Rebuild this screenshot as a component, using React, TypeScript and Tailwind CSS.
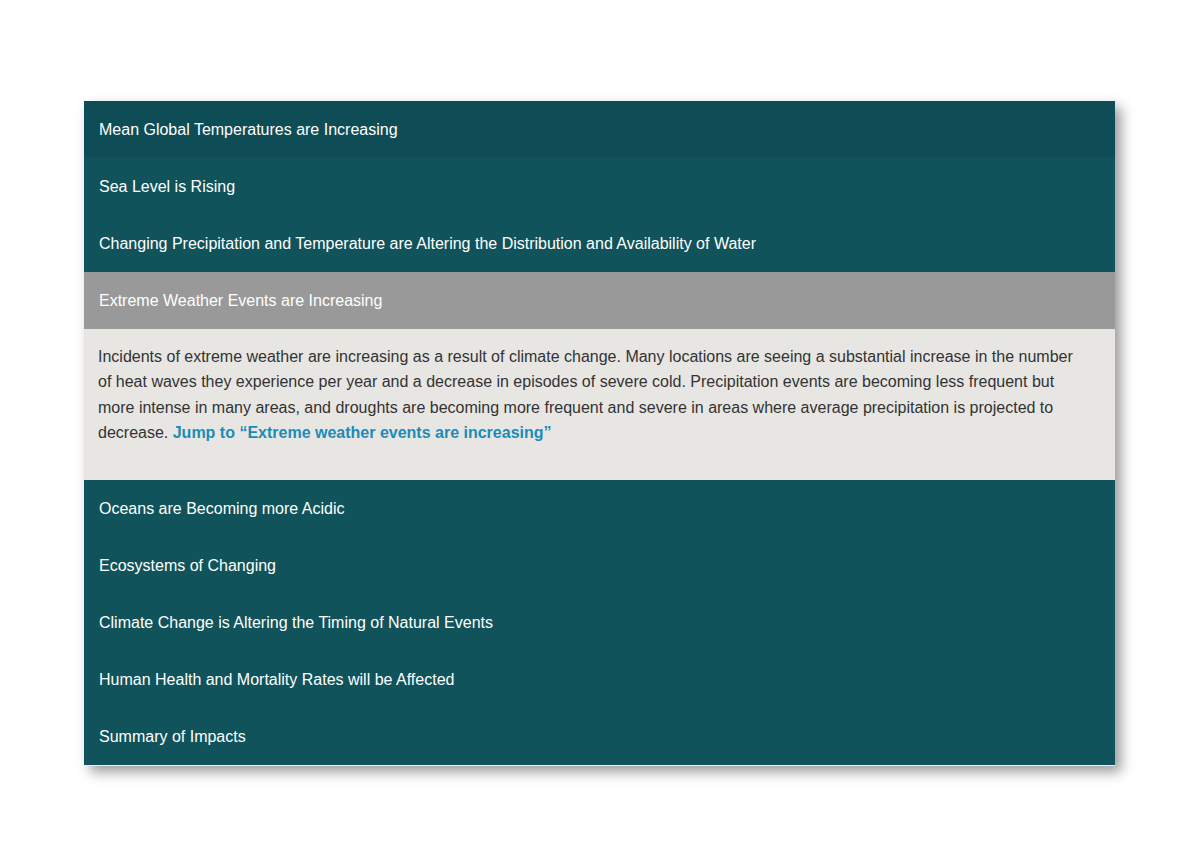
const items = [
  "Mean Global Temperatures are Increasing",
  "Sea Level is Rising",
  "Changing Precipitation and Temperature are Altering the Distribution and Availability of Water",
  "Extreme Weather Events are Increasing",
  "Oceans are Becoming more Acidic",
  "Ecosystems of Changing",
  "Climate Change is Altering the Timing of Natural Events",
  "Human Health and Mortality Rates will be Affected",
  "Summary of Impacts",
];

export default function App() {
  return (
    <div className="min-h-[866px] bg-white pt-[101px] pl-[84px] font-['Liberation_Sans',Arial,sans-serif]">
      <div className="w-[1031px] border-b border-[#e8eeee] bg-[#10535b] shadow-[6px_6px_12px_rgba(0,0,0,0.4)]">
        {items.map((label, i) => {
          const open = i === 3;
          return (
            <div key={label}>
              <div
                className={
                  "flex h-[57px] items-center px-[15px] text-[16px] text-white " +
                  (open ? "bg-[#999999] text-[#f4f4f4]" : i === 0 ? "bg-[#0e4d55]" : "bg-[#10535b]")
                }
              >
                {label}
              </div>
              {open && (
                <div className="h-[151px] bg-[#e7e6e3] pl-[14px] pr-[30px] pt-[15px] text-[16px] leading-[25.3px] text-[#333333]">
                  Incidents of extreme weather are increasing as a result of climate change. Many locations are seeing a substantial increase in the number of heat waves they experience per year and a decrease in episodes of severe cold. Precipitation events are becoming less frequent but more intense in many areas, and droughts are becoming more frequent and severe in areas where average precipitation is projected to decrease.{" "}
                  <a href="#" className="font-bold text-[#1b8cb9]">
                    Jump to “Extreme weather events are increasing”
                  </a>
                </div>
              )}
            </div>
          );
        })}
      </div>
    </div>
  );
}
